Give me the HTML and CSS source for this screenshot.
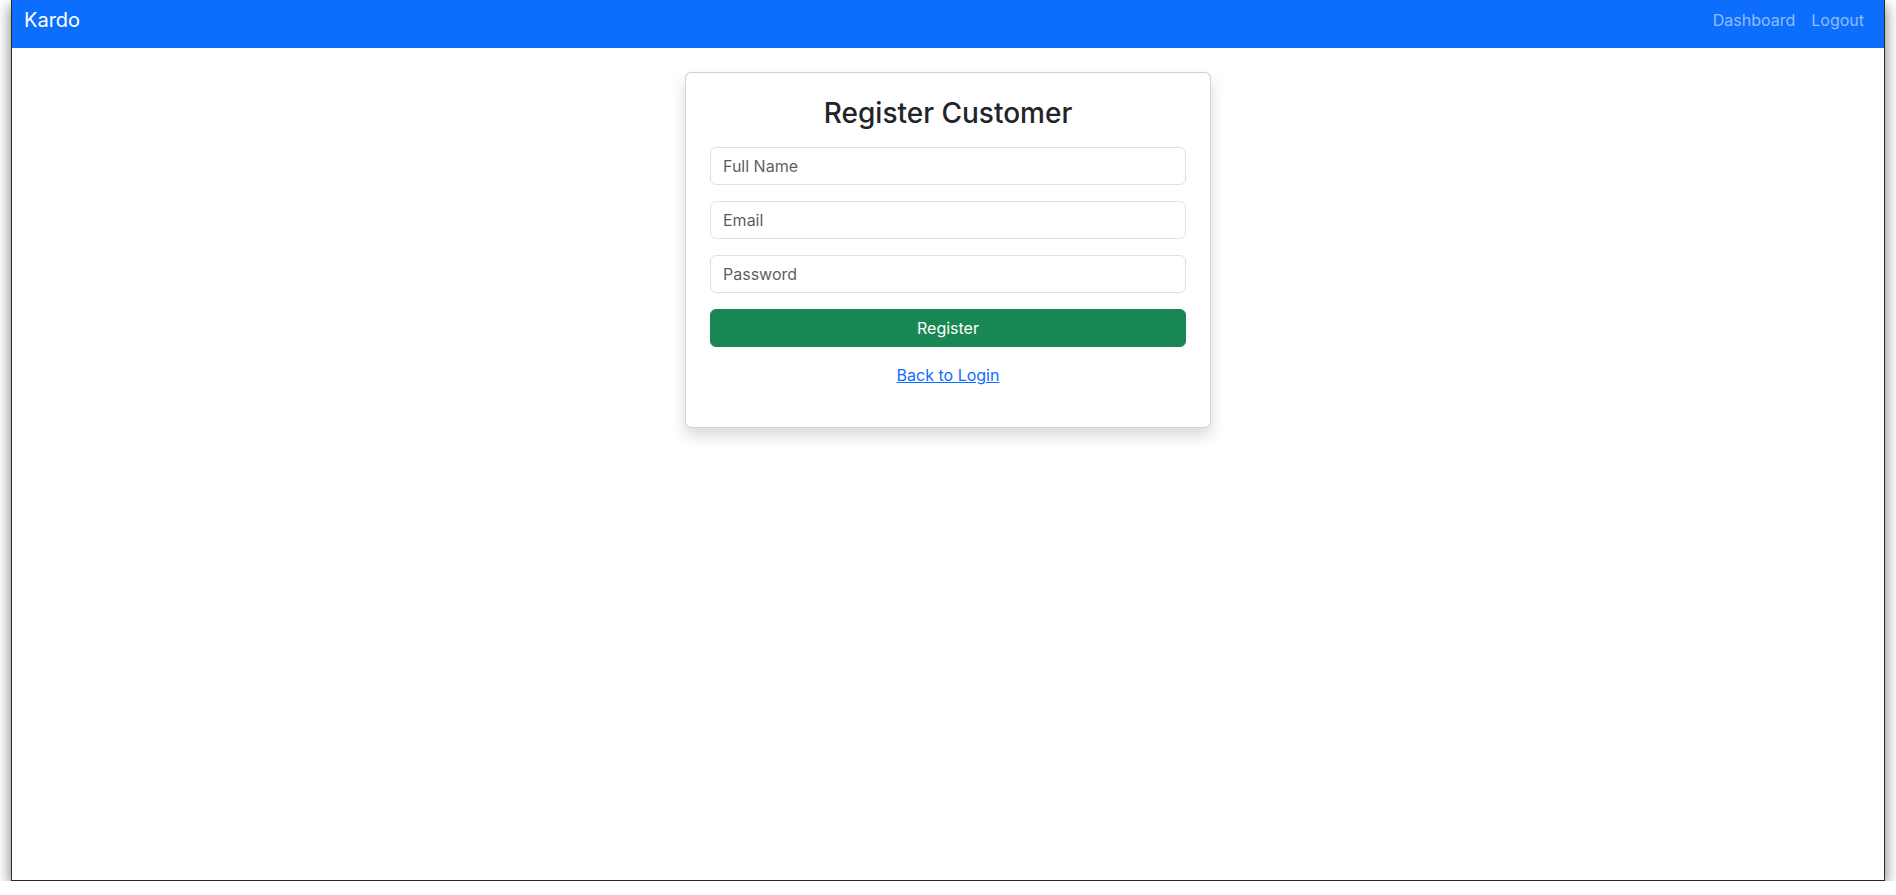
FILE: index.html
```html
<!DOCTYPE html>
<html lang="en">
<head>
<meta charset="utf-8">
<title>Kardo</title>
<link rel="stylesheet" href="styles.css">
</head>
<body>
<div class="window">
  <nav class="navbar">
    <a class="brand" href="#">Kardo</a>
    <div class="nav-links">
      <a class="nav-link" href="#">Dashboard</a>
      <a class="nav-link" href="#">Logout</a>
    </div>
  </nav>
  <main class="main">
    <div class="card">
      <h3 class="card-title">Register Customer</h3>
      <form class="form">
        <input class="form-control" type="text" placeholder="Full Name">
        <input class="form-control" type="email" placeholder="Email">
        <input class="form-control" type="password" placeholder="Password">
        <button class="btn" type="button">Register</button>
      </form>
      <p class="back"><a href="#">Back to Login</a></p>
    </div>
  </main>
</div>
</body>
</html>
```

FILE: styles.css
```css
* { box-sizing: border-box; }
html, body {
  margin: 0;
  padding: 0;
  background: #ffffff;
  font-family: Inter, "Noto Sans", sans-serif;
  color: #212529;
  overflow: hidden;
}
.window {
  margin-left: 11px;
  width: 1874px;
  height: 881px;
  border: 1px solid #2a2a2a;
  border-top: none;
  background: #fff;
  box-shadow: 0 6px 14px rgba(0, 0, 0, 0.55);
}
.navbar {
  height: 48px;
  background: #0d6efd;
  display: flex;
  align-items: center;
  justify-content: space-between;
  padding: 0 12px 8px 12px;
}
.brand {
  color: #fff;
  text-decoration: none;
  font-size: 20px;
  line-height: 30px;
}
.nav-links {
  display: flex;
}
.nav-link {
  color: rgba(255, 255, 255, 0.55);
  text-decoration: none;
  font-size: 16px;
  line-height: 24px;
  padding: 8px;
}
.main {
  display: flex;
  justify-content: center;
  padding-top: 24px;
}
.card {
  width: 526px;
  border: 1px solid rgba(0, 0, 0, 0.175);
  border-radius: 6px;
  padding: 24px 24px;
  box-shadow: 0 8px 16px rgba(0, 0, 0, 0.15);
  background: #fff;
}
.card-title {
  margin: 0 0 16px 0;
  text-align: center;
  font-size: 28px;
  font-weight: 500;
  line-height: 1.2;
}
.form {
  display: flex;
  flex-direction: column;
  gap: 16px;
}
.form-control {
  display: block;
  width: 100%;
  height: 38px;
  padding: 6px 12px;
  font-family: inherit;
  font-size: 16px;
  line-height: 24px;
  color: #212529;
  border: 1px solid #dee2e6;
  border-radius: 6px;
  background: #fff;
  outline: none;
}
.form-control::placeholder {
  color: rgba(33, 37, 41, 0.75);
}
.btn {
  display: block;
  width: 100%;
  height: 38px;
  border: 1px solid #198754;
  border-radius: 6px;
  background: #198754;
  color: #fff;
  font-family: inherit;
  font-size: 16px;
  line-height: 24px;
}
.back {
  margin: 16px 0;
  text-align: center;
  font-size: 16px;
  line-height: 24px;
}
.back a {
  color: #0d6efd;
  text-decoration: underline;
}
```
